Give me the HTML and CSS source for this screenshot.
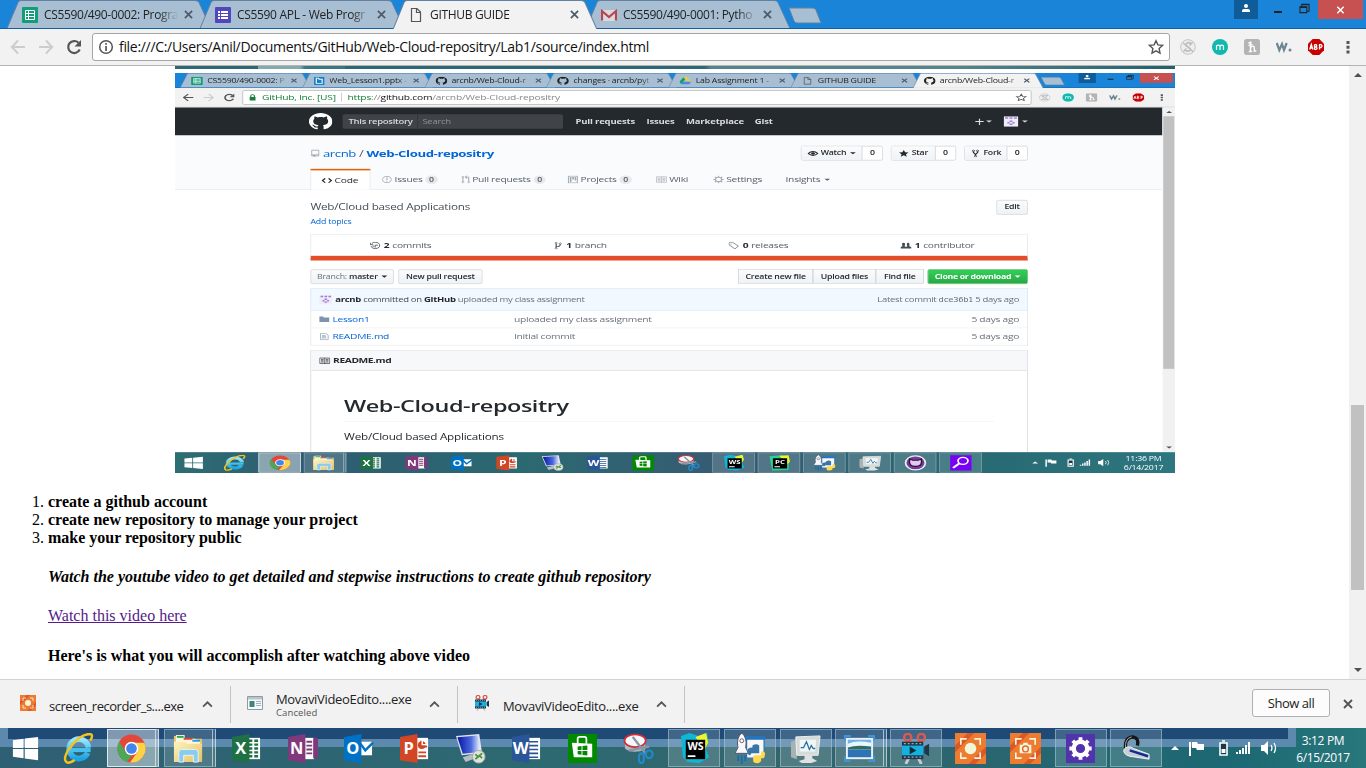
FILE: index.html
```html
<!DOCTYPE html>
<html lang="en">
<head>
<meta charset="utf-8">
<title>GITHUB GUIDE</title>
<link rel="stylesheet" href="styles.css">
</head>
<body>
<svg class="defs" aria-hidden="true">
<defs>
<linearGradient id="gie" x1="0" y1="0" x2="0" y2="1"><stop offset="0" stop-color="#9be6fb"/><stop offset="1" stop-color="#1aa5e3"/></linearGradient>
<linearGradient id="gscreen" x1="0" y1="0" x2="1" y2="0"><stop offset="0" stop-color="#0715a5"/><stop offset=".6" stop-color="#4a68dc"/><stop offset="1" stop-color="#eef4ff"/></linearGradient>
<linearGradient id="gfold" x1="0" y1="0" x2="1" y2="1"><stop offset="0" stop-color="#fff6bd"/><stop offset="1" stop-color="#e6bf62"/></linearGradient>
</defs>
</svg>
<svg class="symbols" aria-hidden="true">
<symbol id="tab" viewBox="0 0 205 28" preserveAspectRatio="none"><path d="M0 28.5L11 2.5Q12 .5 14 .5H188Q191 .5 192 2.5L204 28.5Z" stroke="#62809f" stroke-width="1"/></symbol>
<symbol id="sheet" viewBox="0 0 16 16"><rect width="16" height="16" rx="1" fill="#109d77"/><path d="M3.5 3.5h9v9h-9zM3.5 6.5h9M3.5 9.5h9M6.5 3.5v9" fill="none" stroke="#fff"/></symbol>
<symbol id="form" viewBox="0 0 16 16"><rect width="16" height="16" rx="1" fill="#5146bd"/><path d="M3 4h2v2H3zM6 4h7v2H6zM3 7h2v2H3zM6 7h7v2H6zM3 10h2v2H3zM6 10h7v2H6z" fill="#fff"/></symbol>
<symbol id="doc" viewBox="0 0 16 16"><path d="M3.5 1.5h5.5l3.5 3.5v9.500h-9zM8.500 1.500v4h4" fill="none" stroke="#555" stroke-width="1.2"/></symbol>
<symbol id="gmail" viewBox="0 0 16 16"><path d="M1 3h14v11H1z" fill="#d8dade"/><path d="M1 13.500V4L8 10l7-6v9.500" fill="none" stroke="#b8454e" stroke-width="2.200"/></symbol>
<symbol id="office" viewBox="0 0 16 16"><path d="M1 0h14v16H1z" fill="#1681c9"/><path d="M4 3h3l1 2h4v8H4z" fill="none" stroke="#fff" stroke-width="1.500"/></symbol>
<symbol id="drive" viewBox="0 0 16 16"><path d="M5.500 1h5l5.500 9h-5z" fill="#fbc633"/><path d="M5.500 1L0 10l2.500 4.500L8 5.500z" fill="#169f62"/><path d="M5 10h11l-2.500 4.500h-11z" fill="#4688ee"/></symbol>
<symbol id="gh" viewBox="0 0 16 16"><path fill="currentColor" d="M8 0C3.580 0 0 3.580 0 8c0 3.540 2.290 6.530 5.470 7.590.4.070.55-.17.55-.38 0-.19-.01-.82-.01-1.490-2.010.37-2.530-.49-2.690-.94-.09-.23-.48-.94-.82-1.130-.28-.15-.68-.52-.01-.53.63-.01 1.080.58 1.230.82.72 1.210 1.870.87 2.330.66.07-.52.28-.87.51-1.070-1.780-.2-3.640-.89-3.640-3.950 0-.87.31-1.590.82-2.150-.08-.2-.36-1.020.08-2.120 0 0 .67-.21 2.200.82.64-.18 1.320-.27 2-.27s1.360.09 2 .27c1.530-1.040 2.200-.82 2.200-.82.44 1.100.16 1.920.08 2.120.51.56.82 1.270.82 2.150 0 3.070-1.870 3.750-3.650 3.950.29.25.54.73.54 1.480 0 1.070-.01 1.930-.01 2.200 0 .21.15.46.55.38A8 8 0 0016 8c0-4.420-3.580-8-8-8z"/></symbol>
<symbol id="x" viewBox="0 0 10 10"><path d="M1 1l8 8M9 1L1 9" fill="none" stroke="currentColor" stroke-width="1.900"/></symbol>
<symbol id="back" viewBox="0 0 16 16"><path d="M15 8H2M8 1.500L1.800 8 8 14.500" fill="none" stroke="currentColor" stroke-width="1.900"/></symbol>
<symbol id="fwd" viewBox="0 0 16 16"><path d="M1 8h13M8 1.500L14.200 8 8 14.500" fill="none" stroke="currentColor" stroke-width="1.900"/></symbol>
<symbol id="reload" viewBox="0 0 16 16"><path d="M13.700 10.500A6 6 0 1 1 12.500 3.800" fill="none" stroke="#555" stroke-width="2.200"/><path d="M15 1v6.500H8.500z" fill="#555"/></symbol>
<symbol id="info" viewBox="0 0 16 16"><circle cx="8" cy="8" r="6.300" fill="none" stroke="#555" stroke-width="1.500"/><path d="M7.200 7h1.700v5H7.200zM7.200 4h1.700v1.700H7.200z" fill="#555"/></symbol>
<symbol id="lock" viewBox="0 0 16 16"><path d="M4 7h8v7H4z" fill="#188038"/><path d="M5.500 7V5a2.500 2.500 0 0 1 5 0v2" fill="none" stroke="#188038" stroke-width="1.500"/></symbol>
<symbol id="star" viewBox="0 0 16 16"><path d="M8 1.700l1.900 4.200 4.600.5-3.400 3.100.9 4.600L8 11.800l-4 2.300.9-4.600L1.500 6.400l4.600-.5z" fill="none" stroke="#555" stroke-width="1.400"/></symbol>
<symbol id="e1" viewBox="0 0 16 16"><circle cx="8" cy="8" r="7.300" fill="#eee" stroke="#c2c2c2"/><path d="M11 4.500C8 2.500 5 4.500 6.500 6.500L10 9.500c1.500 2-1.500 3.500-4.500 2M3 4l10 8.500M12.500 3.500L9.500 6.500M6.500 9.500l-3 3" fill="none" stroke="#bdbdbd" stroke-width="1.600"/></symbol>
<symbol id="e2" viewBox="0 0 16 16"><circle cx="8" cy="8" r="8" fill="#0fb9ae"/><path d="M4.500 11V6.200M4.500 7q1.700-1.700 3.500 0v4M8 7q1.700-1.700 3.500 0v4" fill="none" stroke="#fff" stroke-width="1.200"/></symbol>
<symbol id="e3" viewBox="0 0 16 16"><rect width="16" height="16" rx="2.500" fill="#b4b4b4"/><path d="M6.500 3v9.500M4.500 4l3-1M4.800 12.500h3.400M6.500 8.500q4-3 3.800.5v3h2M4.500 6.500l4-1" fill="none" stroke="#fff" stroke-width="1.400"/></symbol>
<symbol id="e4" viewBox="0 0 16 16"><path d="M.7 4l2.600 7L6 5l2 6 2.700-7" fill="none" stroke="#6e8592" stroke-width="2.200"/><circle cx="14" cy="11" r="1.500" fill="#6e8592"/></symbol>
<symbol id="e5" viewBox="0 0 16 16"><path d="M4.700 0h6.600L16 4.700v6.600L11.300 16H4.700L0 11.300V4.700z" fill="#c90000"/><path d="M1.700 10.500L3.300 5.500l1.600 5M2.300 9h2M6.500 5.500v5M6.500 5.600h1.500q1.500 1.200 0 2.400H6.500M8 8q2 1.200 0 2.400H6.500M11.500 10.600V5.600h1.500q2 1.500 0 2.900h-1.500" fill="none" stroke="#fff" stroke-width="1.300"/></symbol>
<symbol id="dots" viewBox="0 0 16 16"><path d="M6.500 2h3v3h-3zM6.500 6.700h3v3h-3zM6.500 11.400h3v3h-3z" fill="#555"/></symbol>
<symbol id="person" viewBox="0 0 24 19"><path d="M0 0h24v19H0z" fill="#105c98"/><circle cx="12" cy="6" r="2" fill="#fff"/><path d="M8 12V10.500Q8 9 10 9h4q2 0 2 1.500V12z" fill="#fff"/></symbol>
<symbol id="restore" viewBox="0 0 12 12"><path d="M1 4h7.500v6.500H1zM3 4V1.500h8v7.500H8.500M1 5h7.500M3 2h8" fill="none" stroke="#222" stroke-width="1.100"/></symbol>
<!-- GitHub glyphs -->
<symbol id="repo" viewBox="0 0 16 16"><path d="M2 1.500h11v10H2zM2 11.500v2.500h3M7.500 14H13v-2.500" fill="none" stroke="#8b9299" stroke-width="1.200"/><path d="M5 12h2.500v4L6.200 15 5 16z" fill="#8b9299"/></symbol>
<symbol id="eye" viewBox="0 0 16 16"><path d="M1 8Q8 0 15 8 8 16 1 8z" fill="none" stroke="#24292e" stroke-width="2"/><circle cx="8" cy="8" r="2.700" fill="#24292e"/></symbol>
<symbol id="fstar" viewBox="0 0 16 16"><path d="M8 1l2 4.700 5 .5-3.800 3.300 1.200 5L8 11.800 3.600 14.500l1.200-5L1 6.200l5-.5z" fill="#24292e"/></symbol>
<symbol id="fork" viewBox="0 0 16 16"><path d="M5 4v2l3 4v3M11 4v2l-3 4" fill="none" stroke="#24292e" stroke-width="1.800"/><g fill="#fff" stroke="#24292e" stroke-width="1.300"><circle cx="5" cy="2.500" r="1.600"/><circle cx="11" cy="2.500" r="1.600"/><circle cx="8" cy="13.800" r="1.600"/></g></symbol>
<symbol id="code" viewBox="0 0 16 16"><path d="M5.500 3.500L1.500 8l4 4.500M10.500 3.500l4 4.500-4 4.500" fill="none" stroke="#24292e" stroke-width="2"/></symbol>
<symbol id="issue" viewBox="0 0 16 16"><circle cx="8" cy="8" r="6.300" fill="none" stroke="#a3aab1" stroke-width="1.400"/><path d="M7.200 4h1.600v5H7.200zM7.200 10.300h1.600v1.700H7.200z" fill="#a3aab1"/></symbol>
<symbol id="pull" viewBox="0 0 16 16"><path d="M3.500 3v10M8 3h4v9M9.500 0L7 3l2.500 3" fill="none" stroke="#a3aab1" stroke-width="1.500"/><g fill="#fff" stroke="#a3aab1" stroke-width="1.200"><circle cx="3.500" cy="3" r="1.500"/><circle cx="3.500" cy="13.500" r="1.500"/><circle cx="12" cy="13.500" r="1.500"/></g></symbol>
<symbol id="proj" viewBox="0 0 16 16"><path d="M1.500 1h13v14h-13z" fill="none" stroke="#a3aab1" stroke-width="1.500"/><path d="M3.500 3H6v10H3.500zM7 3h2.500v5H7zM10.500 3H13v7h-2.500z" fill="#a3aab1"/></symbol>
<symbol id="book" viewBox="0 0 16 16"><path d="M.7 2.500h14.600v11H.7zM8 2.500v12M2.500 5.500h4M2.500 8h4M2.500 10.500h4M9.500 5.500h4M9.500 8h4M9.500 10.500h4" fill="none" stroke="currentColor" stroke-width="1.100"/></symbol>
<symbol id="gear" viewBox="0 0 16 16"><circle cx="8" cy="8" r="4.500" fill="none" stroke="currentColor" stroke-width="1.600"/><path d="M8 .5v3M8 12.500v3M.5 8h3M12.500 8h3M2.700 2.700l2.200 2.200M11.100 11.100l2.200 2.200M2.700 13.300l2.200-2.200M11.100 4.900l2.200-2.200" stroke="currentColor" stroke-width="2"/></symbol>
<symbol id="hist" viewBox="0 0 16 16"><path d="M3 3.500A6.500 6.500 0 1 1 1.800 9M1 2v4h4M8 12V7h4M4 9h3" fill="none" stroke="#444d56" stroke-width="1.400"/></symbol>
<symbol id="branch" viewBox="0 0 16 16"><path d="M5 4v9M5 10q6 0 6-5" fill="none" stroke="#444d56" stroke-width="1.700"/><g fill="#fff" stroke="#444d56"><circle cx="5" cy="2.800" r="1.600"/><circle cx="11" cy="4" r="1.600"/><circle cx="5" cy="13.500" r="1.600"/></g></symbol>
<symbol id="tag" viewBox="0 0 16 16"><path d="M1 3q0-2 2-2h3l8.500 8-5 5.500L1 6.500z" fill="none" stroke="#6a737d" stroke-width="1.300"/><circle cx="4" cy="4.500" r="1" fill="#6a737d"/></symbol>
<symbol id="people" viewBox="0 0 16 16"><path d="M0 14v-3l3-2q-2-7 1.500-7T6 9l2 1.500L10 9Q8 2 11 2t1.800 7l3.200 2v3z" fill="#444d56"/></symbol>
<symbol id="avatar" viewBox="0 0 20 20"><path d="M0 0h20v20H0z" fill="#f0edf6"/><path d="M2 2h4v3H2zM8 2h4v3H8zM14 2h4v3h-4zM8 8h4v3H8zM5 11h3v3H5zM12 11h3v3h-3zM8 14h4v3H8z" fill="#9a82dc"/></symbol>
<symbol id="folder" viewBox="0 0 16 16"><path d="M0 2h6l1 2h9v10H0z" fill="#7d94ae"/></symbol>
<symbol id="file" viewBox="0 0 16 16"><path d="M2 1h8l4 4v10H2zM4 6h6M4 8.500h7M4 11h7" fill="none" stroke="#7d94ae" stroke-width="1.200"/></symbol>
<!-- taskbar icons -->
<symbol id="win" viewBox="0 0 32 32"><path d="M3 7.500L14 6v9.400H3zM15.200 5.800L29 4v11.400H15.200zM3 16.600h11V26L3 24.500zM15.200 16.600H29V28l-13.800-1.800z" fill="#fff"/></symbol>
<symbol id="ie" viewBox="0 0 32 32"><path d="M25.500 20.500a10 10 0 1 1 .8-5.500" fill="none" stroke="url(#gie)" stroke-width="5.800"/><path d="M9 17.500h19.500" fill="none" stroke="#45bfee" stroke-width="4.500"/><path d="M3.500 30C-3 25 14 2 27 1c4.500 0 3 4 1 7M3.500 30c2 1.500 5.500 0 8.500-2" fill="none" stroke="#f4c31d" stroke-width="2.500"/></symbol>
<symbol id="chrome" viewBox="0 0 32 32"><circle cx="16" cy="16" r="14.500" fill="#e3473a"/><path d="M3.400 8.800L10 20l6 3-4.500 7A14.500 14.500 0 0 1 3.400 8.800z" fill="#4ca757"/><path d="M29.200 10H16l6 9.500L14.500 30.400A14.500 14.500 0 0 0 29.200 10z" fill="#fdd148"/><circle cx="16" cy="16" r="7" fill="#fff"/><circle cx="16" cy="16" r="5.500" fill="#4385ee"/></symbol>
<symbol id="explorer" viewBox="0 0 32 32"><path d="M1 5V3h9l2 3h18v24H1z" fill="#e7c66a"/><path d="M3 2h9v4h10l6 2v8H3z" fill="#fbf6df"/><path d="M4 3h7v2H4z" fill="#25ab4e"/><path d="M11 5h9v2h-9z" fill="#dc4930"/><path d="M20 7h8v2h-8z" fill="#2b97dc"/><path d="M1 9h12l2 2h15v19H1z" fill="url(#gfold)"/><path d="M6 30V20q0-3 3-3h14q3 0 3 3v10h-5v-7H11v7z" fill="#8accec" stroke="#dff5ff"/></symbol>
<symbol id="excel" viewBox="0 0 32 32"><path d="M16 5h14v22H16z" fill="#fff"/><path d="M18 8h4M24 8h4M18 12h4M24 12h4M18 16h4M24 16h4M18 20h4M24 20h4M18 24h4M24 24h4" stroke="#1f7145" stroke-width="2.400"/><path d="M1 4l18-3v30L1 28z" fill="#1f7145"/><text x="10" y="22" class="ltr">X</text></symbol>
<symbol id="onenote" viewBox="0 0 32 32"><path d="M16 5h12v22H16z" fill="#fff"/><path d="M20 9h6M20 13h6M20 17h6M20 21h6M28 6h3v5h-3zM28 13h3v5h-3zM28 20h3v5h-3z" stroke="#80397b" stroke-width="2" fill="#80397b"/><path d="M1 4l18-3v30L1 28z" fill="#80397b"/><text x="10" y="22" class="ltr">N</text></symbol>
<symbol id="outlook" viewBox="0 0 32 32"><path d="M18 9h12v14H18z" fill="#fff"/><path d="M18 11l5 7 8-8" fill="none" stroke="#0072c6" stroke-width="2.500"/><path d="M1 4l18-3v30L1 28z" fill="#0072c6"/><text x="10" y="22" class="ltr">O</text></symbol>
<symbol id="ppt" viewBox="0 0 32 32"><path d="M16 5h14v22H16z" fill="#fff"/><path d="M20 20h8M20 24h8M23 8v6h6" stroke="#d24625" stroke-width="2" fill="none"/><circle cx="23.500" cy="12.500" r="4" fill="#d24625"/><path d="M24 6v6h6" fill="none" stroke="#fff" stroke-width="1.500"/><path d="M1 4l18-3v30L1 28z" fill="#d24625"/><text x="10" y="22" class="ltr">P</text></symbol>
<symbol id="word" viewBox="0 0 32 32"><path d="M16 5h14v22H16z" fill="#fff"/><path d="M18 9h10M18 13h10M18 17h10M18 21h10M18 25h10" stroke="#2a5699" stroke-width="1.700"/><path d="M1 4l18-3v30L1 28z" fill="#2a5699"/><text x="10" y="22" class="ltr">W</text></symbol>
<symbol id="rdp" viewBox="0 0 32 32"><path d="M1 3l24-2 3 20-21 2z" fill="#dfe4ec"/><path d="M2.500 4.500l21-2 2.500 17-18 2z" fill="url(#gscreen)"/><path d="M8 25l10-3 3 4-10 4z" fill="#b8bdc3"/><circle cx="24.500" cy="24.500" r="6.500" fill="#e0e3dd" stroke="#aaa"/><path d="M21 22l3 2.500-3 2.500M28 21l-3 2.500 3 2.500" fill="none" stroke="#42963a" stroke-width="1.800"/></symbol>
<symbol id="store" viewBox="0 0 32 32"><path d="M1 1h30v30H1z" fill="#008a00"/><path d="M5 10l21 1v14L7 25z" fill="#fff"/><path d="M11 11V6q0-2 2-2h5q2 0 2 2v5" fill="none" stroke="#fff" stroke-width="1.800"/><path d="M11 14l4-.5v4h-4zM16 13.400l5-.6v4.700h-5zM11 18.500h4v4l-4-.5zM16 18.500h5v4.700l-5-.6z" fill="#008a00"/></symbol>
<symbol id="snip" viewBox="0 0 32 32"><path d="M2 9v7q8 6 21 1V8z" fill="#b5bac2"/><ellipse cx="12.500" cy="8" rx="11" ry="6.500" fill="#f7f7f9" stroke="#cf2d35" stroke-width="1.800"/><path d="M10 4l14 18M6 18l21-4" stroke="#8797a8" stroke-width="2.500"/><g fill="none" stroke="#2289c8" stroke-width="2.300"><ellipse cx="19" cy="26" rx="2.500" ry="5"/><ellipse cx="27" cy="22" rx="3.500" ry="4"/></g></symbol>
<symbol id="ws" viewBox="0 0 32 32"><path d="M2 3l9-3 9 3 9-3 1 9-2 8 3 8-10 6-12-1-5-5z" fill="#10b7d5"/><path d="M17 4l11-4 2 10-4 8z" fill="#edf52f"/><path d="M7 7h20v20H7z"/><text x="17" y="18" class="code-ltr">WS</text><path d="M9 23h8v1.800H9z" fill="#fff"/></symbol>
<symbol id="pc" viewBox="0 0 32 32"><path d="M2 3l18-2 10 5-1 24-23 1z" fill="#2bd294"/><path d="M16 2l13-1 2 13-4 5z" fill="#edf52f"/><path d="M7 7h20v20H7z"/><text x="17" y="18" class="code-ltr">PC</text><path d="M9 23h8v1.800H9z" fill="#fff"/></symbol>
<symbol id="py" viewBox="0 0 32 32"><path d="M12 4h18v22H12z" fill="#f8f8f8" stroke="#2475bd" stroke-width="1.200"/><path d="M11 3h20v4H11z" fill="#2475bd"/><path d="M7 0q6 5 4 15l3 6H0l3-6Q1 5 7 0z" fill="#f8f8fa" stroke="#556"/><circle cx="7" cy="8" r="2" fill="#fff" stroke="#667"/><path d="M3.500 23v6M7 23v9M10.500 23v6" stroke="#146db4" stroke-width="1.800"/><path d="M18 13q4-3 7 0v8h-8q-2 4-4 0-2-6 5-6z" fill="#3975a8"/><path d="M19 30q5 3 8-1v-3h3q3-8-3-7v4h-7q-2 1-1 7z" fill="#ffd84b"/></symbol>
<symbol id="mon" viewBox="0 0 32 32"><path d="M1 9l6-2v20l-6-2z" fill="#a9b2b2"/><path d="M6 4l25-1-2 20H7z" fill="#d5dada" stroke="#f0f2f1"/><path d="M10 7h17l-1 12H10z" fill="#f1f6f9"/><path d="M11 15h3l3-6 3 8 2-4 2 3h2" fill="none" stroke="#2a7199" stroke-width="1.300"/><path d="M15 23h8v3l5 3-6 2H12l-3-2 6-2z" fill="#dfe2e1"/></symbol>
<symbol id="pic" viewBox="0 0 32 32"><path d="M2 5h28v22H2z" fill="#e8f1f7"/><path d="M4 7h24v7H4z" fill="#6fb2ec"/><path d="M4 11q9-4 24-1v6H4z" fill="#e9f5fd"/><path d="M4 15q8-3 24-1v3H4z" fill="#2e6e5e"/><path d="M4 17h24v8H4z" fill="#2e73b3"/><path d="M1 8V3h6M25 3h6v5M1 24v5h6M25 29h6v-5" fill="none" stroke="#3b96dd" stroke-width="2"/></symbol>
<symbol id="cam" viewBox="0 0 32 32"><g fill="none" stroke="#db5a4d" stroke-width="2.600"><circle cx="8" cy="4.500" r="3.700"/><circle cx="22" cy="4.500" r="3.700"/></g><path d="M8 8l6 5M22 8l-6 5" stroke="#db5a4d" stroke-width="3"/><path d="M10 24l-4 8M18 24l4 8" stroke="#c6ced1" stroke-width="3"/><path d="M2 9h22v18H2z" fill="#20364a"/><path d="M2 13h22v10H2z" fill="#14b2df"/><path d="M4 11h18M4 25h18" stroke="#9ab" stroke-width="1.300" stroke-dasharray="2 2"/><path d="M10 14l7 4-7 4z" fill="#132c3c"/><path d="M25 14l5-3v13l-5-3z" fill="#20364a"/></symbol>
<symbol id="rec" viewBox="0 0 32 32"><path d="M0 0h32v32H0z" fill="#ee7c30"/><path d="M0 13L13 0h7L0 20zM14 32L32 14v7L21 32z" fill="#dc5927"/><path d="M6 12V6h6M20 6h6v6M6 20v6h6M20 26h6v-6" fill="none" stroke="#fff4e1" stroke-width="1.700"/><circle cx="16" cy="16" r="6" fill="#f1f6da"/></symbol>
<symbol id="recam" viewBox="0 0 32 32"><path d="M0 0h32v32H0z" fill="#ee7c30"/><path d="M0 13L13 0h7L0 20zM14 32L32 14v7L21 32z" fill="#dc5927"/><path d="M6 12V6h6M20 6h6v6M6 20v6h6M20 26h6v-6" fill="none" stroke="#fff4e1" stroke-width="1.700"/><path d="M10 12h3l1-2h4l1 2h3v9H10z" fill="#f7f4df"/><circle cx="16" cy="16.500" r="3" fill="#f7f4df" stroke="#e26c2a" stroke-width="1.500"/></symbol>
<symbol id="set" viewBox="0 0 32 32"><path d="M1 1h30v30H1z" fill="#5133ab"/><g transform="translate(16 16)"><circle r="7" fill="none" stroke="#fff" stroke-width="4.500"/><path d="M0-11.500v4M0 7.500v4M-11.500 0h4M7.500 0h4M-8-8l3 3M5 5l3 3M-8 8l3-3M5-5l3-3" stroke="#fff" stroke-width="4"/></g></symbol>
<symbol id="head" viewBox="0 0 32 32"><path d="M6 17Q4 5 13 4q7 1 5 9" fill="none" stroke="#161616" stroke-width="3.500"/><path d="M6 17Q4 6 12 4" fill="none" stroke="#aaa"/><path d="M4 17q4-5 10-1l16 6v5L10 24q-7-2-6-7z" fill="#c9ced4" stroke="#f4f4f4"/><path d="M10 18l19 6" stroke="#102c91" stroke-width="2.500"/></symbol>
<symbol id="cat" viewBox="0 0 32 32"><circle cx="16" cy="16" r="14" fill="#763b9e" stroke="#eee" stroke-width="2.500"/><path d="M8 8l4 3h8l4-3q3 15-8 15T8 8z" fill="#e1cbed" stroke="#2c133b" stroke-width="2"/></symbol>
<symbol id="search" viewBox="0 0 32 32"><path d="M1 1h30v30H1z" fill="#7a00f5"/><circle cx="19" cy="12" r="7" fill="none" stroke="#fff" stroke-width="2.500"/><path d="M14 17L5 26" stroke="#fff" stroke-width="3.500"/></symbol>
<symbol id="tray" viewBox="0 0 110 20"><g fill="#fff"><path d="M1 12l4-4 4 4zM19 4h2v14h-2zM22 4h5l1 2h6v6h-7l-1-2h-4z"/><path d="M66 14h2v2h-2zM69 12h2v4h-2zM72 10h2v6h-2zM75 7h2v9h-2zM78 4h2v12h-2zM91 7h3l4-4v14l-4-4h-3z"/></g><path d="M50 5h7v12h-7zM52 3h3" fill="#173b4b" stroke="#fff" stroke-width="1.600"/><path d="M51.500 11h4v4h-4z" fill="#fff"/><path d="M101 7q2 3 0 6M104 5q3 5 0 10" fill="none" stroke="#fff" stroke-width="1.300"/></symbol>
<symbol id="app" viewBox="0 0 16 14"><path d="M.5.5h15v13H.5z" fill="#f7fafb" stroke="#8b9ca6"/><path d="M1 1h14v2.500H1z" fill="#b9c5cc"/><path d="M2.500 5h5v6h-5z" fill="#418577"/><path d="M9 5.500h5M9 7.500h5M9 9.500h5" stroke="#aab"/></symbol>
<symbol id="chev" viewBox="0 0 10 6"><path d="M1 5l4-4 4 4" fill="none" stroke="#555" stroke-width="1.600"/></symbol>
</svg>

<div class="window outer">
  <div class="tabs">
    <div class="tab"><svg class="shape"><use href="#tab"/></svg><svg class="fav"><use href="#sheet"/></svg><span>CS5590/490-0002: Progra</span><svg class="cls"><use href="#x"/></svg></div>
    <div class="tab"><svg class="shape"><use href="#tab"/></svg><svg class="fav"><use href="#form"/></svg><span>CS5590 APL - Web Progr</span><svg class="cls"><use href="#x"/></svg></div>
    <div class="tab on"><svg class="shape"><use href="#tab"/></svg><svg class="fav"><use href="#doc"/></svg><span>GITHUB GUIDE</span><svg class="cls"><use href="#x"/></svg></div>
    <div class="tab"><svg class="shape"><use href="#tab"/></svg><svg class="fav"><use href="#gmail"/></svg><span>CS5590/490-0001: Pytho</span><svg class="cls"><use href="#x"/></svg></div>
    <svg class="newtab" viewBox="0 0 34 17"><path d="M1 1h24q2 0 3 2l5 13H9q-2 0-3-2z" fill="#a8bfd3" stroke="#62809f"/></svg>
    <div class="controls"><svg class="person"><use href="#person"/></svg><i class="min"></i><svg class="res"><use href="#restore"/></svg><div class="close"><svg><use href="#x"/></svg></div></div>
  </div>
  <div class="toolbar">
    <svg class="nav off"><use href="#back"/></svg><svg class="nav off"><use href="#fwd"/></svg><svg class="nav"><use href="#reload"/></svg>
    <div class="omni"><svg><use href="#info"/></svg><span class="url">file:///C:/Users/Anil/Documents/GitHub/Web-Cloud-repositry/Lab1/source/index.html</span><svg class="st"><use href="#star"/></svg></div>
    <div class="exts"><svg><use href="#e1"/></svg><svg><use href="#e2"/></svg><svg><use href="#e3"/></svg><svg><use href="#e4"/></svg><svg><use href="#e5"/></svg><svg><use href="#dots"/></svg></div>
  </div>
  <div class="view">
    <div class="page guide">
      <div class="strip"></div>
      <div class="shot">
        <div class="window inner">
          <div class="tabs">
            <div class="tab"><svg class="shape"><use href="#tab"/></svg><svg class="fav"><use href="#sheet"/></svg><span>CS5590/490-0002: P</span><svg class="cls"><use href="#x"/></svg></div>
            <div class="tab"><svg class="shape"><use href="#tab"/></svg><svg class="fav"><use href="#office"/></svg><span>Web_Lesson1.pptx -</span><svg class="cls"><use href="#x"/></svg></div>
            <div class="tab"><svg class="shape"><use href="#tab"/></svg><svg class="fav"><use href="#gh"/></svg><span>arcnb/Web-Cloud-r</span><svg class="cls"><use href="#x"/></svg></div>
            <div class="tab"><svg class="shape"><use href="#tab"/></svg><svg class="fav"><use href="#gh"/></svg><span>changes · arcnb/pyt</span><svg class="cls"><use href="#x"/></svg></div>
            <div class="tab"><svg class="shape"><use href="#tab"/></svg><svg class="fav"><use href="#drive"/></svg><span>Lab Assignment 1 -</span><svg class="cls"><use href="#x"/></svg></div>
            <div class="tab"><svg class="shape"><use href="#tab"/></svg><svg class="fav"><use href="#doc"/></svg><span>GITHUB GUIDE</span><svg class="cls"><use href="#x"/></svg></div>
            <div class="tab on"><svg class="shape"><use href="#tab"/></svg><svg class="fav"><use href="#gh"/></svg><span>arcnb/Web-Cloud-r</span><svg class="cls"><use href="#x"/></svg></div>
            <svg class="newtab" viewBox="0 0 34 17"><path d="M1 1h24q2 0 3 2l5 13H9q-2 0-3-2z" fill="#a8bfd3" stroke="#62809f"/></svg>
            <div class="controls"><svg class="person"><use href="#person"/></svg><i class="min"></i><svg class="res"><use href="#restore"/></svg><div class="close"><svg><use href="#x"/></svg></div></div>
          </div>
          <div class="toolbar">
            <svg class="nav"><use href="#back"/></svg><svg class="nav off"><use href="#fwd"/></svg><svg class="nav"><use href="#reload"/></svg>
            <div class="omni"><svg><use href="#lock"/></svg><span class="secure">GitHub, Inc. [US]</span><span class="url"><b>https</b>://<em>github.com</em>/arcnb/Web-Cloud-repositry</span><svg class="st"><use href="#star"/></svg></div>
            <div class="exts"><svg><use href="#e1"/></svg><svg><use href="#e2"/></svg><svg><use href="#e3"/></svg><svg><use href="#e4"/></svg><svg><use href="#e5"/></svg><svg><use href="#dots"/></svg></div>
          </div>
          <div class="view">
            <div class="page gh">
              <div class="gh-top">
                <svg class="logo"><use href="#gh"/></svg>
                <div class="gh-search"><span>This repository</span><span>Search</span></div>
                <nav class="gh-nav"><b>Pull requests</b><b>Issues</b><b>Marketplace</b><b>Gist</b></nav>
                <div class="gh-user"><span class="plus">+</span><i class="caret"></i><svg><use href="#avatar"/></svg><i class="caret"></i></div>
              </div>
              <div class="gh-head">
                <div class="gh-title"><svg><use href="#repo"/></svg><h1><span>arcnb</span> <i>/</i> <b>Web-Cloud-repositry</b></h1>
                  <div class="social w1"><span><svg><use href="#eye"/></svg>Watch<i class="caret"></i></span><span>0</span></div>
                  <div class="social w2"><span><svg><use href="#fstar"/></svg>Star</span><span>0</span></div>
                  <div class="social w3"><span><svg><use href="#fork"/></svg>Fork</span><span>0</span></div>
                </div>
                <div class="gh-tabs">
                  <div class="cur"><svg><use href="#code"/></svg>Code</div>
                  <div><svg><use href="#issue"/></svg>Issues<u>0</u></div>
                  <div><svg><use href="#pull"/></svg>Pull requests<u>0</u></div>
                  <div><svg><use href="#proj"/></svg>Projects<u>0</u></div>
                  <div><svg><use href="#book"/></svg>Wiki</div>
                  <div><svg><use href="#gear"/></svg>Settings</div>
                  <div>Insights<i class="caret"></i></div>
                </div>
              </div>
              <div class="gh-body">
                <div class="about"><div><p>Web/Cloud based Applications</p><a>Add topics</a></div><span class="btn edit">Edit</span></div>
                <div class="stats"><div><svg><use href="#hist"/></svg><b>2</b> commits</div><div><svg><use href="#branch"/></svg><b>1</b> branch</div><div><svg><use href="#tag"/></svg><b>0</b> releases</div><div><svg><use href="#people"/></svg><b>1</b> contributor</div></div>
                <div class="filenav"><span class="btn br"><em>Branch:</em>&nbsp;master<i class="caret"></i></span><span class="btn np">New pull request</span><div class="group"><span class="btn">Create new file</span><span class="btn">Upload files</span><span class="btn">Find file</span></div><span class="btn clone">Clone or download<i class="caret"></i></span></div>
                <div class="commit"><svg><use href="#avatar"/></svg><b>arcnb</b>&nbsp;committed on&nbsp;<b>GitHub</b>&nbsp;<span>uploaded my class assignment</span><span class="last">Latest commit <code>dce36b1</code> 5 days ago</span></div>
                <div class="files">
                  <div><svg><use href="#folder"/></svg><a>Lesson1</a><span>uploaded my class assignment</span><span>5 days ago</span></div>
                  <div><svg><use href="#file"/></svg><a>README.md</a><span>Initial commit</span><span>5 days ago</span></div>
                </div>
                <div class="readme"><h3><svg><use href="#book"/></svg>README.md</h3><article><h2>Web-Cloud-repositry</h2><p>Web/Cloud based Applications</p></article></div>
              </div>
            </div>
            <div class="scroll"><i class="up"></i><b></b><i class="down"></i></div>
          </div>
          <div class="taskbar">
            <div class="cell start"><svg><use href="#win"/></svg></div>
            <div class="cell"><svg><use href="#ie"/></svg></div>
            <div class="cell"><span class="open act"><svg><use href="#chrome"/></svg></span></div>
            <div class="cell"><span class="open stack"><svg><use href="#explorer"/></svg></span></div>
            <div class="cell"><svg><use href="#excel"/></svg></div>
            <div class="cell"><svg><use href="#onenote"/></svg></div>
            <div class="cell"><svg><use href="#outlook"/></svg></div>
            <div class="cell"><svg><use href="#ppt"/></svg></div>
            <div class="cell"><svg><use href="#rdp"/></svg></div>
            <div class="cell"><svg><use href="#word"/></svg></div>
            <div class="cell"><svg><use href="#store"/></svg></div>
            <div class="cell"><svg><use href="#snip"/></svg></div>
            <div class="cell"><span class="open"><svg><use href="#ws"/></svg></span></div>
            <div class="cell"><span class="open"><svg><use href="#pc"/></svg></span></div>
            <div class="cell"><span class="open"><svg><use href="#py"/></svg></span></div>
            <div class="cell"><span class="open"><svg><use href="#mon"/></svg></span></div>
            <div class="cell"><span class="open"><svg><use href="#cat"/></svg></span></div>
            <div class="cell"><span class="open"><svg><use href="#search"/></svg></span></div>
            <svg class="tray"><use href="#tray"/></svg>
            <div class="clock">11:36 PM<br>6/14/2017</div>
          </div>
        </div>
      </div>
      <ol>
        <li>create a github account</li>
        <li>create new repository to manage your project</li>
        <li>make your repository public</li>
      </ol>
      <div class="notes">
        <h4><em>Watch the youtube video to get detailed and stepwise instructions to create github repository</em></h4>
        <a>Watch this video here</a>
        <h4>Here's is what you will accomplish after watching above video</h4>
      </div>
    </div>
    <div class="scroll"><i class="up"></i><b></b><i class="down"></i></div>
  </div>
  <div class="downloads">
    <div class="dl d1"><svg class="di"><use href="#rec"/></svg><div>screen_recorder_s....exe</div><svg class="chev"><use href="#chev"/></svg></div>
    <div class="dl d2"><svg class="di"><use href="#app"/></svg><div>MovaviVideoEdito....exe<small>Canceled</small></div><svg class="chev"><use href="#chev"/></svg></div>
    <div class="dl d3"><svg class="di"><use href="#cam"/></svg><div>MovaviVideoEdito....exe</div><svg class="chev"><use href="#chev"/></svg></div>
    <span class="showall">Show all</span><svg class="dx"><use href="#x"/></svg>
  </div>
  <div class="taskbar">
    <div class="cell start"><svg><use href="#win"/></svg></div>
    <div class="cell"><svg><use href="#ie"/></svg></div>
    <div class="cell"><span class="open act stack"><svg><use href="#chrome"/></svg></span></div>
    <div class="cell"><span class="open stack"><svg><use href="#explorer"/></svg></span></div>
    <div class="cell"><svg><use href="#excel"/></svg></div>
    <div class="cell"><svg><use href="#onenote"/></svg></div>
    <div class="cell"><svg><use href="#outlook"/></svg></div>
    <div class="cell"><svg><use href="#ppt"/></svg></div>
    <div class="cell"><svg><use href="#rdp"/></svg></div>
    <div class="cell"><svg><use href="#word"/></svg></div>
    <div class="cell"><svg><use href="#store"/></svg></div>
    <div class="cell"><svg><use href="#snip"/></svg></div>
    <div class="cell"><span class="open"><svg><use href="#ws"/></svg></span></div>
    <div class="cell"><span class="open"><svg><use href="#py"/></svg></span></div>
    <div class="cell n"><span class="open"><svg><use href="#mon"/></svg></span></div>
    <div class="cell n"><span class="open stack"><svg><use href="#pic"/></svg></span></div>
    <div class="cell n"><span class="open"><svg><use href="#cam"/></svg></span></div>
    <div class="cell n"><svg><use href="#rec"/></svg></div>
    <div class="cell n"><svg><use href="#recam"/></svg></div>
    <div class="cell n"><span class="open"><svg><use href="#set"/></svg></span></div>
    <div class="cell n"><span class="open"><svg><use href="#head"/></svg></span></div>
    <svg class="tray"><use href="#tray"/></svg>
    <div class="clock">3:12 PM<br>6/15/2017</div>
  </div>
</div>
</body>
</html>
```
FILE: styles.css
```css
*{box-sizing:border-box}
body{margin:0;width:1366px;height:768px;overflow:hidden}
svg{display:block;flex:none;overflow:visible}
.defs{position:absolute;width:0;height:0}
.symbols{display:none}
.window{width:1366px;height:768px;display:flex;flex-direction:column;font-family:"Open Sans",sans-serif;font-size:12px;color:#222;background:#fff}
.window>div{flex:none}

/* tab strip */
.tabs{height:29px;display:flex;background:#1a84d8;border-bottom:1px solid #155f9d;padding-left:7px}
.tab{width:193px;height:29px;position:relative;display:flex;align-items:center;padding-left:15px;flex:none}
.inner .tab{width:166.800px}
.shape{position:absolute;left:0;top:0;width:205px;height:28px;fill:#a8bfd3}
.inner .shape{width:179px}
.on{z-index:2}
.on .shape{fill:#f2f2f2;height:29px}
.fav{width:16px;height:16px;position:relative}
.tab span{position:relative;margin-left:6px;width:136px;overflow:hidden;white-space:nowrap;letter-spacing:-.32px;line-height:18px;-webkit-mask-image:linear-gradient(90deg,#000 84%,transparent 99%);mask-image:linear-gradient(90deg,#000 84%,transparent 99%)}
.inner .tab span{width:110px}
.cls{position:relative;width:9px;height:9px;margin-left:4px;color:#4d5a68}
.newtab{width:34px;height:17px;margin:7px 0 0 9px}
.inner .newtab{margin-left:7px}
.controls{margin-left:auto;display:flex;padding-right:3px}
.person{width:24px;height:19px}
.min{width:8px;height:2px;background:#222;margin:11px 17px 0 16px}
.res{width:11px;height:11px;margin:3px 8px 0 0}
.close{width:45px;height:19px;background:#c75050;color:#fff;display:flex;justify-content:center;align-items:center}
.close svg{width:9px;height:8px}

/* toolbar */
.toolbar{height:37px;background:#f2f2f2;border-bottom:1px solid #b4b4b4;display:flex;align-items:center;padding:0 0 1px 10px}
.nav{width:16px;height:16px;margin-right:12px;color:#555}
.nav.off{color:#ccc}
.omni{width:1078px;height:28px;margin:0 11px 0 -2px;border:1px solid #a6a6a6;border-radius:3px;background:#fff;display:flex;align-items:center;padding:0 5px}
.omni svg{width:16px;height:16px}
.url{margin-left:5px;font-size:14px;letter-spacing:-.31px;white-space:nowrap;color:#111}
.inner .url{color:#888;border-left:1px solid #bbb;margin-left:7px;padding-left:8px;line-height:17px}
.url b{font-weight:400;color:#188038}.url em{font-style:normal;color:#111}
.secure{margin-left:5px;color:#188038;font-size:14px;letter-spacing:-.38px}
.omni .st{margin-left:auto}
.exts{display:flex;gap:16px;margin-left:-1px}
.exts svg{width:16px;height:16px}
.view{flex:1 1 0!important;min-height:0;display:flex;overflow:hidden}
.page{width:1349px;flex:none;overflow:hidden}
.scroll{width:17px;background:#f1f1f1;display:flex;flex-direction:column;align-items:center}
.scroll b{width:13px;height:185px;background:#c1c1c1;margin-top:328px}
.inner .scroll b{margin-top:6px;height:485px;width:15px}
.up,.down{border:4px solid transparent;border-bottom-color:#505050;border-top:0;margin-top:7px}
.down{border-bottom:0;border-top:4px solid #505050;margin:auto 0 7px}

/* guide page */
.guide{font-family:"Liberation Serif",serif;font-size:16px;line-height:18px;color:#000}
.strip{width:1000px;height:3px;margin:0 0 4px 175px;background:linear-gradient(90deg,#2c6873 0 83px,#84aab0 83px 125px,#3d7580 130px 170px,#2c6873 170px 530px,#54848c 536px 780px,#22606c)}
.shot{width:1000px;height:400px;margin-left:175px;overflow:hidden}
.inner{transform:scale(.73206,.52083);transform-origin:0 0}
ol{margin:20px 0 0;padding-left:48px}
li{font-weight:700}
li::marker{font-weight:400}
.notes{padding-left:48px}
h4{margin:21.300px 0 20.600px;font-size:16px}
.notes a{display:block;color:#551a8b;text-decoration:underline}
.notes a+h4{margin-top:22px}

/* github page */
.gh-top{height:54px;background:#24292e;display:flex;align-items:center;padding-left:183px}
.logo{width:32px;height:32px;color:#fff}
.gh-search{width:301px;height:28px;margin-left:14px;background:#404448;border-radius:3px;display:grid;grid-template-columns:102px 1fr;align-items:center;color:#d8dadb;font-size:13px}
.gh-search span{padding-left:8px;white-space:nowrap;line-height:28px;letter-spacing:-.4px}
.gh-search span+span{color:#8f9295;border-left:1px solid #2d3237;padding-left:6px}
.gh-search span:first-child{font-weight:600}
.gh-nav{display:grid;grid-template-columns:97px 54px 94px 60px;margin-left:17px;color:#dcdddf;font-size:13px;letter-spacing:-.25px;white-space:nowrap}
.gh-user{display:flex;align-items:center;color:#ddd;margin-left:240px}
.gh-user svg{width:20px;height:20px;margin-left:16px}
.plus{font-size:24px;line-height:20px;margin-right:-3px}
.caret{display:inline-block;border:4px solid transparent;border-top-color:currentColor;border-bottom:0;margin-left:5px}
.gh-head{height:104px;background:#fafbfc;border-bottom:1px solid #e1e4e8;padding:20px 184px 0 185px;display:flex;flex-direction:column;justify-content:space-between}
.gh-title{height:28px;display:flex;align-items:center;gap:11px}
.gh-title>svg{width:14px;height:16px;margin-right:-8px}
h1{font-size:18px;font-weight:400;margin:0 auto 0 0;color:#0366d6;white-space:nowrap;letter-spacing:-.55px}
h1 i{font-style:normal;color:#586069}h1 b{font-weight:700}
.social{display:flex;height:28px;border:1px solid #c8cbce;border-radius:3px;background:#fff;font-weight:600;font-size:12px;letter-spacing:-.35px;color:#24292e}
.social span{display:flex;align-items:center;justify-content:center;flex:1}
.social span:first-child{background:linear-gradient(#fafbfc,#eff3f6);border-right:1px solid #c8cbce}
.social span+span{flex:0 0 27px}
.social svg{width:15px;height:15px;margin-right:3px}
.w1{width:112px}.w2{width:89px}.w3{width:87px}
.gh-tabs{display:grid;grid-template-columns:82px 118px 146px 121px 78px 99px 80px;height:40px;font-size:14px;letter-spacing:-.38px;color:#586069;margin-bottom:-1px}
.gh-tabs div{display:flex;align-items:center;padding:1px 0 0 15px;white-space:nowrap}
.gh-tabs div:nth-child(n+3){padding-left:5px}
.gh-tabs svg{width:15px;height:15px;margin-right:3px;color:#a3aab1}
.gh-tabs div:nth-child(3) svg{margin-right:1px}
.gh-tabs .cur{background:#fff;border:1px solid #e1e4e8;border-top:3px solid #e36209;border-bottom:0;color:#24292e;padding-left:14px}
u{text-decoration:none;background:#e6e8ea;border-radius:10px;font-size:12px;line-height:16px;padding:0 5px;margin-left:4px;font-weight:600}
.gh-body{width:980px;margin-left:185px;color:#586069;letter-spacing:-.42px}
.about{height:86px;padding-top:20px;display:flex;justify-content:space-between;align-items:flex-start}
.about p{margin:1px 0 -1px;font-size:16px;line-height:24px;letter-spacing:-.33px;color:#444d56}
.about a{display:block;font-size:12px;line-height:20px;margin-top:7px;color:#0366d6;letter-spacing:-.25px}
.btn{height:28px;padding:0 10px;display:flex;align-items:center;justify-content:center;border:1px solid #c8cbce;border-radius:3px;background:linear-gradient(#fafbfc,#eff3f6);font-size:12px;font-weight:600;color:#24292e;white-space:nowrap;letter-spacing:-.3px}
.btn em{font-style:normal;font-weight:400;color:#6a737d}
.edit{width:43px}
.stats{height:50px;border:1px solid #e1e4e8;border-bottom:9px solid #e34c26;display:grid;grid-template-columns:repeat(4,1fr);font-size:14px;letter-spacing:-.38px}
.stats div{display:flex;align-items:center;justify-content:center;gap:4px}
.stats b{color:#24292e}
.stats svg{width:15px;height:15px}
.filenav{display:flex;margin:17px 0 8px}
.br{width:114px}.np{width:115px;margin-left:6px}
.group{display:grid;grid-template-columns:102px 86px 65px;margin:0 6px 0 auto}
.group .btn{border-radius:0;margin-right:-1px;padding:0}
.clone{width:137px;color:#fff;background:linear-gradient(#34d058,#28a745);border-color:#28a745;font-weight:700;letter-spacing:-.45px}
.commit{height:43px;background:#f1f8ff;border:1px solid #d3e6fb;display:flex;align-items:center;padding:0 11px;font-size:13px;color:#444d56}
.commit svg{width:18px;height:18px;margin-right:4px}
.commit b{color:#24292e}.commit span{color:#6a737d}
.commit .last{margin-left:auto}
code{font:12px "DejaVu Sans Mono",monospace;letter-spacing:-.5px}
.files{border:1px solid #e1e4e8;border-top:0;height:67px}
.files div{height:33px;display:grid;grid-template-columns:18px 248px 1fr auto;align-items:center;padding:0 11px;font-size:14px;letter-spacing:-.4px;color:#6a737d}
.files div+div{border-top:1px solid #eaecef}
.files svg{width:14px;height:14px}.files a{color:#0366d6}
.readme{margin-top:9px;border:1px solid #d1d5da;height:400px}
h3{margin:0;height:39px;background:#f6f8fa;border-bottom:1px solid #d1d5da;padding-left:11px;font-size:14px;letter-spacing:-.6px;color:#24292e;display:flex;align-items:center;gap:4px}
h3 svg{width:15px;height:15px}
article{padding:46px 45px}
h2{margin:0;font-size:32px;line-height:40px;height:51px;border-bottom:1px solid #eaecef;font-weight:600;color:#24292e;letter-spacing:-.6px}
article p{font-size:16px;line-height:24px;margin:17px 0;letter-spacing:-.33px;color:#24292e}

/* downloads shelf */
.downloads{height:49px;border-top:1px solid #d2d2d2;background:#f2f2f2;display:flex;align-items:center;font-size:13px;letter-spacing:-.33px}
.dl{height:37px;border-right:1px solid #c4c4c4;display:flex;align-items:center;white-space:nowrap}
.d1{width:231px;padding-left:20px;letter-spacing:-.46px}.d2{width:227px;padding-left:16px}.d3{width:227px;padding-left:16px}
.di{width:16px;height:16px;margin-bottom:3px}
.dl div{width:166px;padding-left:13px;line-height:16px;margin-top:4px}
.dl small{display:block;font-size:9.500px;line-height:11px;letter-spacing:.1px;color:#555}
.dl.d2 div{margin-top:1px}
.chev{width:11px;height:7px}
.showall{margin-left:auto;width:78px;height:28px;border:1px solid #b0b0b0;border-radius:3px;background:#fcfcfc;display:flex;align-items:center;justify-content:center;letter-spacing:-.45px;margin-top:-2px}
.dx{width:10px;height:10px;color:#555;margin:0 13px}

/* taskbar */
.taskbar{height:40px;display:flex;align-items:center;background:linear-gradient(#5c89ae,#5c89ae) 0 0/8px 19px no-repeat,linear-gradient(#5c89ae,#5c89ae) 1288px 0/8px 19px no-repeat,linear-gradient(#1e4a75,#1e4a75) 0 0/1288px 11px no-repeat,linear-gradient(#5c89ae,#5c89ae) 0 11px/1296px 8px no-repeat,linear-gradient(90deg,#2f5f73,#2d6971 40%,#33646d 60%,#1c6873 90%,#28777b)}
.inner .taskbar{background:linear-gradient(90deg,#2c6e72,#2f5b72 12%,#2b6970 35%,#365b73 55%,#286972 80%,#2d7780)}
.cell{width:56px;height:40px;display:flex;align-items:center;justify-content:center;flex:none}
.cell.n{width:55px}
.inner .cell{width:62px}
.window .start{width:50px}
.start svg{margin-right:-1px}
.cell svg{width:31px;height:31px}
.cell .open{width:52px;height:38px;border:1px solid #a9c3cd99;background:#ffffff26;display:flex;align-items:center;justify-content:center}
.inner .open{width:58px}
.cell .act{background:#ffffff70;border-color:#ffffffc0}
.cell .stack{border-right:4px double #ffffff90}
.outer>.taskbar .act{margin-right:2px}
.tray{width:110px;height:20px;margin-left:7px}
.inner .tray{margin-left:66px}
.clock{margin-left:auto;width:88px;padding-top:1px;color:#fff;text-align:center;line-height:17px;letter-spacing:-.35px}
.ltr{font:700 17px "Open Sans",sans-serif;fill:#fff;text-anchor:middle}
.code-ltr{font:700 11px "Open Sans",sans-serif;fill:#fff;text-anchor:middle}
```
